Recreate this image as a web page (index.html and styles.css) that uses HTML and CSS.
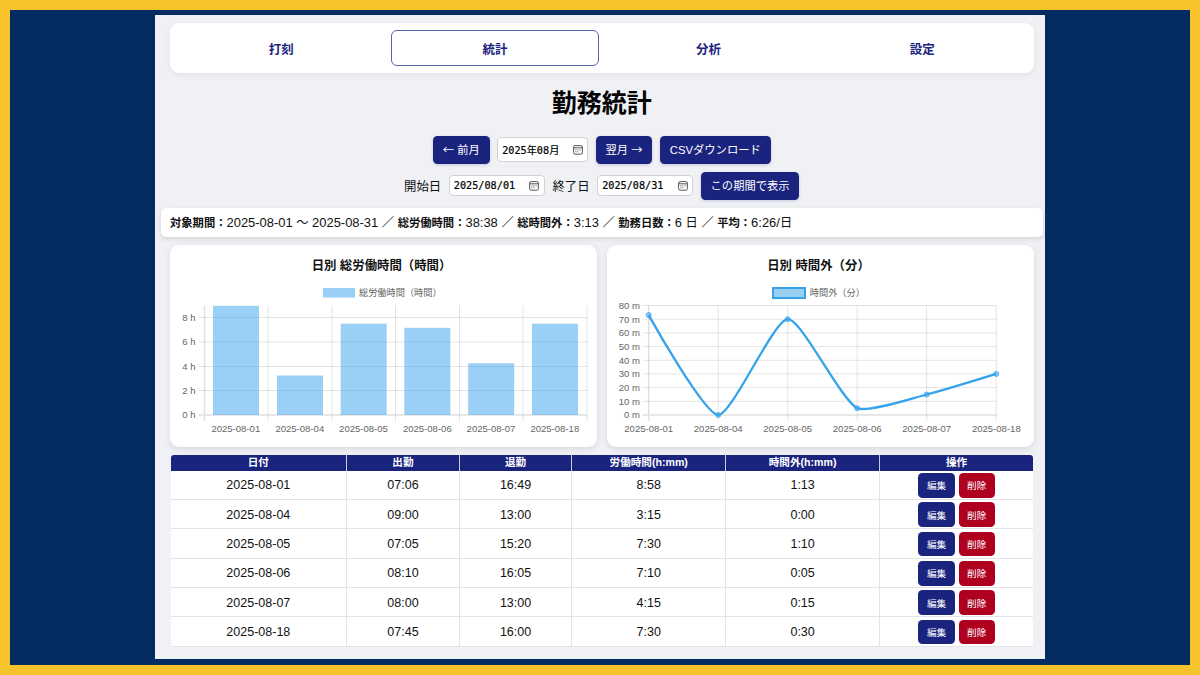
FILE: index.html
```html
<!DOCTYPE html>
<html lang="ja">
<head>
    <meta charset="UTF-8" />
    <meta name="viewport" content="width=device-width, initial-scale=1.0" />
    <title>勤務統計</title>
    <link rel="stylesheet" href="styles.css">
</head>
<body>

<div class="app">
    <nav class="tabs">
        <a class="tab">打刻</a>
        <a class="tab active">統計</a>
        <a class="tab">分析</a>
        <a class="tab">設定</a>
    </nav>

    <h1>勤務統計</h1>

    <div class="controls">
        <button class="btn"><span class="arrow">←</span> 前月</button>
        <div class="field month">
            <span>2025年08月</span>
            <svg class="cal" viewBox="0 0 10 10"><rect x="0.6" y="0.6" width="8.8" height="8.6" rx="1.6"/><path d="M0.6 2.8h8.8M4.4 4.8h1M6.6 4.8h1M2.4 4.8h1M2.4 6.8h1M4.4 6.8h1"/></svg>
        </div>
        <button class="btn">翌月 <span class="arrow">→</span></button>
        <button class="btn">CSVダウンロード</button>
    </div>

    <div class="controls range">
        <label>開始日</label>
        <div class="field">
            <span>2025/08/01</span>
            <svg class="cal" viewBox="0 0 10 10"><rect x="0.6" y="0.6" width="8.8" height="8.6" rx="1.6"/><path d="M0.6 2.8h8.8M4.4 4.8h1M6.6 4.8h1M2.4 4.8h1M2.4 6.8h1M4.4 6.8h1"/></svg>
        </div>
        <label>終了日</label>
        <div class="field">
            <span>2025/08/31</span>
            <svg class="cal" viewBox="0 0 10 10"><rect x="0.6" y="0.6" width="8.8" height="8.6" rx="1.6"/><path d="M0.6 2.8h8.8M4.4 4.8h1M6.6 4.8h1M2.4 4.8h1M2.4 6.8h1M4.4 6.8h1"/></svg>
        </div>
        <button class="btn">この期間で表示</button>
    </div>

    <div class="summary">
        <strong>対象期間：</strong>2025-08-01 <i>～</i> 2025-08-31 <i>／</i>
        <strong>総労働時間：</strong>38:38 <i>／</i>
        <strong>総時間外：</strong>3:13 <i>／</i>
        <strong>勤務日数：</strong>6 <i>日</i> <i>／</i>
        <strong>平均：</strong>6:26/<i>日</i>
    </div>

    <div class="charts">
        <section class="card">
            <h2>日別 総労働時間（時間）</h2>
            <svg class="chart" width="427" height="160" viewBox="0 0 427 160">
                <rect class="bar" x="153" y="8" width="32" height="9.6"/>
                <text class="legend" x="189" y="16.2">総労働時間（時間）</text>
                <path class="grid" d="M28.5 37.5H417M28.5 62H417M28.5 86.5H417M28.5 110.5H417M98 25.5V141M162 25.5V141M225.5 25.5V141M289.5 25.5V141M353 25.5V141M417 25.5V141"/>
                <path class="grid axis" d="M34.5 25.5V141M28.5 135H417"/>
                <g class="bar">
                    <rect x="43" y="25.8" width="46" height="109.2"/>
                    <rect x="107" y="95.5" width="46" height="39.5"/>
                    <rect x="170.7" y="43.7" width="46" height="91.3"/>
                    <rect x="234.3" y="47.8" width="46" height="87.2"/>
                    <rect x="298.2" y="83.3" width="46" height="51.7"/>
                    <rect x="362" y="43.7" width="46" height="91.3"/>
                </g>
                <g class="ylabels">
                    <text x="25.5" y="40.9">8 h</text>
                    <text x="25.5" y="65.4">6 h</text>
                    <text x="25.5" y="89.9">4 h</text>
                    <text x="25.5" y="113.9">2 h</text>
                    <text x="25.5" y="138.4">0 h</text>
                </g>
                <g class="xlabels">
                    <text x="65.8" y="152.4">2025-08-01</text>
                    <text x="129.8" y="152.4">2025-08-04</text>
                    <text x="193.5" y="152.4">2025-08-05</text>
                    <text x="257.3" y="152.4">2025-08-06</text>
                    <text x="321" y="152.4">2025-08-07</text>
                    <text x="384.8" y="152.4">2025-08-18</text>
                </g>
            </svg>
        </section>

        <section class="card">
            <h2>日別 時間外（分）</h2>
            <svg class="chart" width="427" height="160" viewBox="0 0 427 160">
                <rect class="swatch" x="166" y="8" width="32" height="10"/>
                <text class="legend" x="202.8" y="16.2">時間外（分）</text>
                <path class="grid" d="M35.5 25.5H389.3M35.5 39.2H389.3M35.5 52.9H389.3M35.5 66.6H389.3M35.5 80.3H389.3M35.5 93.9H389.3M35.5 107.6H389.3M35.5 121.3H389.3M111.2 25.5V141M180.7 25.5V141M250.2 25.5V141M319.7 25.5V141M389.3 25.5V141"/>
                <path class="grid axis" d="M41.7 25.5V141M35.5 135H389.3"/>
                <path class="line" d="M41.7 35.1C41.7 35.1 97.1 134.6 111.2 135C124.9 135 166.5 39.9 180.7 39.2C194.3 38.5 233.1 118.9 250.2 128.2C260.9 132.8 306 117.9 319.7 114.5C333.8 111 389.3 93.9 389.3 93.9"/>
                <g class="points">
                    <circle cx="41.7" cy="35.1" r="2.5"/>
                    <circle cx="111.2" cy="135" r="2.5"/>
                    <circle cx="180.7" cy="39.2" r="2.5"/>
                    <circle cx="250.2" cy="128.2" r="2.5"/>
                    <circle cx="319.7" cy="114.5" r="2.5"/>
                    <circle cx="389.3" cy="93.9" r="2.5"/>
                </g>
                <g class="ylabels">
                    <text x="33" y="28.9">80 m</text>
                    <text x="33" y="42.6">70 m</text>
                    <text x="33" y="56.3">60 m</text>
                    <text x="33" y="70">50 m</text>
                    <text x="33" y="83.7">40 m</text>
                    <text x="33" y="97.3">30 m</text>
                    <text x="33" y="111">20 m</text>
                    <text x="33" y="124.7">10 m</text>
                    <text x="33" y="138.4">0 m</text>
                </g>
                <g class="xlabels">
                    <text x="41.7" y="152.4">2025-08-01</text>
                    <text x="111.2" y="152.4">2025-08-04</text>
                    <text x="180.7" y="152.4">2025-08-05</text>
                    <text x="250.2" y="152.4">2025-08-06</text>
                    <text x="319.7" y="152.4">2025-08-07</text>
                    <text x="389.3" y="152.4">2025-08-18</text>
                </g>
            </svg>
        </section>
    </div>

    <div class="table">
        <div class="row head">
            <div>日付</div><div>出勤</div><div>退勤</div><div>労働時間(h:mm)</div><div>時間外(h:mm)</div><div>操作</div>
        </div>
        <div class="row">
            <div>2025-08-01</div><div>07:06</div><div>16:49</div><div>8:58</div><div>1:13</div>
            <div><button class="small">編集</button><button class="small delete">削除</button></div>
        </div>
        <div class="row">
            <div>2025-08-04</div><div>09:00</div><div>13:00</div><div>3:15</div><div>0:00</div>
            <div><button class="small">編集</button><button class="small delete">削除</button></div>
        </div>
        <div class="row">
            <div>2025-08-05</div><div>07:05</div><div>15:20</div><div>7:30</div><div>1:10</div>
            <div><button class="small">編集</button><button class="small delete">削除</button></div>
        </div>
        <div class="row">
            <div>2025-08-06</div><div>08:10</div><div>16:05</div><div>7:10</div><div>0:05</div>
            <div><button class="small">編集</button><button class="small delete">削除</button></div>
        </div>
        <div class="row">
            <div>2025-08-07</div><div>08:00</div><div>13:00</div><div>4:15</div><div>0:15</div>
            <div><button class="small">編集</button><button class="small delete">削除</button></div>
        </div>
        <div class="row">
            <div>2025-08-18</div><div>07:45</div><div>16:00</div><div>7:30</div><div>0:30</div>
            <div><button class="small">編集</button><button class="small delete">削除</button></div>
        </div>
    </div>
</div>

</body>
</html>
```
FILE: styles.css
```css
* {
    box-sizing: border-box;
}
body {
    margin: 0;
    height: 675px;
    border: 10px solid #f7c32b;
    background-color: #032c63;
    padding: 5.4px 145px;
    overflow: hidden;
    color: #111;
    font-family: "Liberation Sans", "Noto Sans CJK JP", sans-serif;
}
.app {
    width: 890.4px;
    height: 644px;
    padding: 8px 11px 0 15px;
    background-color: #f0f1f5;
}
.tabs {
    display: grid;
    grid-template-columns: repeat(4, 1fr);
    gap: 5px;
    width: 863.5px;
    height: 49.5px;
    padding: 6.8px 7px;
    background: white;
    border-radius: 9px;
    box-shadow: 0 2px 6px rgba(0, 0, 0, 0.06);
}
.tab {
    display: flex;
    align-items: center;
    justify-content: center;
    border: 1px solid transparent;
    border-radius: 6px;
    color: #1a237e;
    font-size: 12.5px;
    font-weight: bold;
}
.tab.active {
    border-color: #5a61a8;
}
h1 {
    width: 863.5px;
    margin: 12px 0 15px;
    color: #050505;
    font-size: 25px;
    line-height: 36px;
    text-align: center;
}
.controls {
    display: flex;
    align-items: center;
    justify-content: center;
    gap: 7.6px;
    width: 863.5px;
    height: 28px;
}
.range {
    margin-top: 7.7px;
}
.btn {
    height: 28px;
    padding: 0 9.8px 1px;
    border: none;
    border-radius: 4.5px;
    background-color: #1a237e;
    color: white;
    font-family: inherit;
    font-size: 11.3px;
    white-space: nowrap;
    box-shadow: 0 1px 3px rgba(26, 35, 126, 0.2);
}
.arrow {
    font-family: "Noto Sans CJK JP", sans-serif;
}
.controls label {
    font-size: 12.4px;
}
.field {
    display: flex;
    align-items: center;
    justify-content: space-between;
    width: 96px;
    height: 21px;
    padding: 0 4.5px 0 4px;
    border: 1px solid #d2d2d6;
    border-radius: 4px;
    background: white;
    color: #000;
    font-family: "DejaVu Sans Mono", "Noto Sans CJK JP", monospace;
    font-size: 10.2px;
    -webkit-text-stroke: 0.2px #000;
}
.field.month {
    width: 91px;
    height: 25px;
}
.cal {
    width: 10px;
    height: 10px;
    fill: none;
    stroke: #444;
    stroke-width: 0.9;
}
.summary {
    width: 881.5px;
    height: 29.5px;
    margin: 8.3px 0 8px -9px;
    padding-left: 9px;
    background: white;
    border-radius: 5px;
    box-shadow: 0 2px 5px rgba(0, 0, 0, 0.12);
    font-size: 12.95px;
    line-height: 29.5px;
    white-space: nowrap;
}
.summary strong {
    font-size: 11.3px;
}
.summary i {
    font-size: 12.2px;
    font-style: normal;
}
.charts {
    display: flex;
    gap: 10px;
}
.card {
    width: 427px;
    height: 201.5px;
    background: white;
    border-radius: 9px;
    box-shadow: 0 2px 6px rgba(0, 0, 0, 0.1);
}
h2 {
    margin: 0;
    padding-top: 11px;
    padding-right: 4px;
    height: 34.5px;
    font-size: 12.4px;
    line-height: 20px;
    text-align: center;
}
.chart {
    display: block;
    fill: #666;
    font-size: 9.55px;
}
.legend {
    font-size: 9.2px;
}
.grid {
    fill: none;
    stroke: #000;
    stroke-opacity: 0.12;
    stroke-width: 0.9;
}
.axis {
    stroke-width: 1.5;
}
.bar {
    fill: #36a2eb;
    fill-opacity: 0.5;
}
.swatch {
    fill: #9bd0f5;
    stroke: #36a2eb;
    stroke-width: 2;
}
.line {
    fill: none;
    stroke: #36a2eb;
    stroke-width: 2.3;
}
.points {
    fill: #36a2eb;
    fill-opacity: 0.5;
    stroke: #36a2eb;
    stroke-width: 0.8;
}
.ylabels {
    text-anchor: end;
}
.xlabels {
    text-anchor: middle;
}
.table {
    width: 862.5px;
    margin: 8.3px 0 0 0.6px;
    border-radius: 3px;
    overflow: hidden;
}
.row {
    display: grid;
    grid-template-columns: 176.5px 112.7px 112.5px 153.9px 153.9px 153px;
    height: 29.35px;
    background: white;
    font-size: 12.5px;
}
.row > div {
    display: flex;
    align-items: center;
    justify-content: center;
    gap: 4px;
    padding-top: 1px;
    border-right: 1px solid #e4e4e8;
    border-bottom: 1px solid #e4e4e8;
}
.row.head {
    height: 15.5px;
    background-color: #1a237e;
    color: white;
    font-size: 10.6px;
    font-weight: bold;
}
.row.head > div {
    padding: 0;
    line-height: 14px;
    align-items: flex-start;
    border-bottom: none;
    border-right-color: #c9cbe0;
}
.row > div:last-child {
    border-right: none;
}
.small {
    width: 36.2px;
    height: 24.7px;
    padding: 0;
    border: none;
    border-radius: 4.5px;
    background-color: #1a237e;
    color: white;
    font-family: inherit;
    font-size: 9.6px;
}
.small.delete {
    background-color: #b00020;
}
```
